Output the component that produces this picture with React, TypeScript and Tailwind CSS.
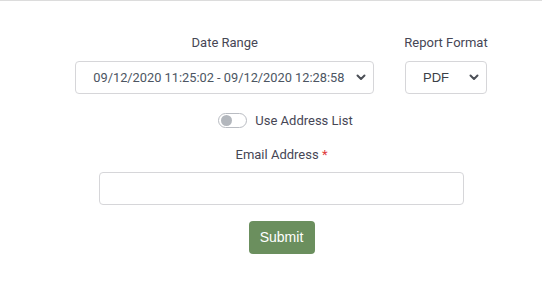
import React from "react";

function Chevron() {
  return (
    <svg width="10" height="7" viewBox="0 0 10 7" className="shrink-0">
      <path d="M1.5 1.5 L5 5 L8.5 1.5" fill="none" stroke="#4b4f56" strokeWidth="2" strokeLinecap="round" strokeLinejoin="round" />
    </svg>
  );
}

export default function App() {
  return (
    <div className="w-[542px] h-[299px] bg-white border-t border-[#dcdcdc] font-['Roboto',sans-serif] text-[13px] text-[#464655]">
      <div className="flex flex-col items-center pl-[21px] pt-[33px]">
        <div className="flex gap-[30px]">
          <div className="flex flex-col items-center">
            <label className="leading-[17px]">Date Range</label>
            <div className="mt-[10px] w-[299px] h-[33px] border border-[#d6d6d9] rounded-[4px] flex items-center pl-[17px] pr-[7px] text-[#4c5562] text-[12.8px] whitespace-nowrap">
              <span className="flex-1">09/12/2020 11:25:02 - 09/12/2020 12:28:58</span>
              <Chevron />
            </div>
          </div>
          <div className="flex flex-col items-center">
            <label className="leading-[17px]">Report Format</label>
            <div className="mt-[10px] w-[82px] h-[33px] border border-[#d6d6d9] rounded-[4px] flex items-center pl-[17px] pr-[7px] text-[#3b3f46] text-[13px] font-['Liberation_Sans',sans-serif]">
              <span className="flex-1">PDF</span>
              <Chevron />
            </div>
          </div>
        </div>

        <div className="mt-[18px] flex items-center gap-[8px] ml-[8px]">
          <div className="w-[29px] h-[15px] rounded-full border border-[#b9bcc2] flex items-center pl-[2px]">
            <div className="w-[11px] h-[11px] rounded-full bg-[#b3b7bd]" />
          </div>
          <span className="leading-[17px]">Use Address List</span>
        </div>

        <label className="mt-[17px] leading-[17px]">
          Email Address <span className="text-[#e03b3b]">*</span>
        </label>
        <input className="mt-[9px] w-[365px] h-[33px] border border-[#d6d6d9] rounded-[4px] outline-none px-3" />

        <button className="mt-[16px] w-[66px] h-[33px] rounded-[4px] bg-[#6b8f5e] text-white text-[14px] font-['Liberation_Sans',sans-serif]">
          Submit
        </button>
      </div>
    </div>
  );
}
